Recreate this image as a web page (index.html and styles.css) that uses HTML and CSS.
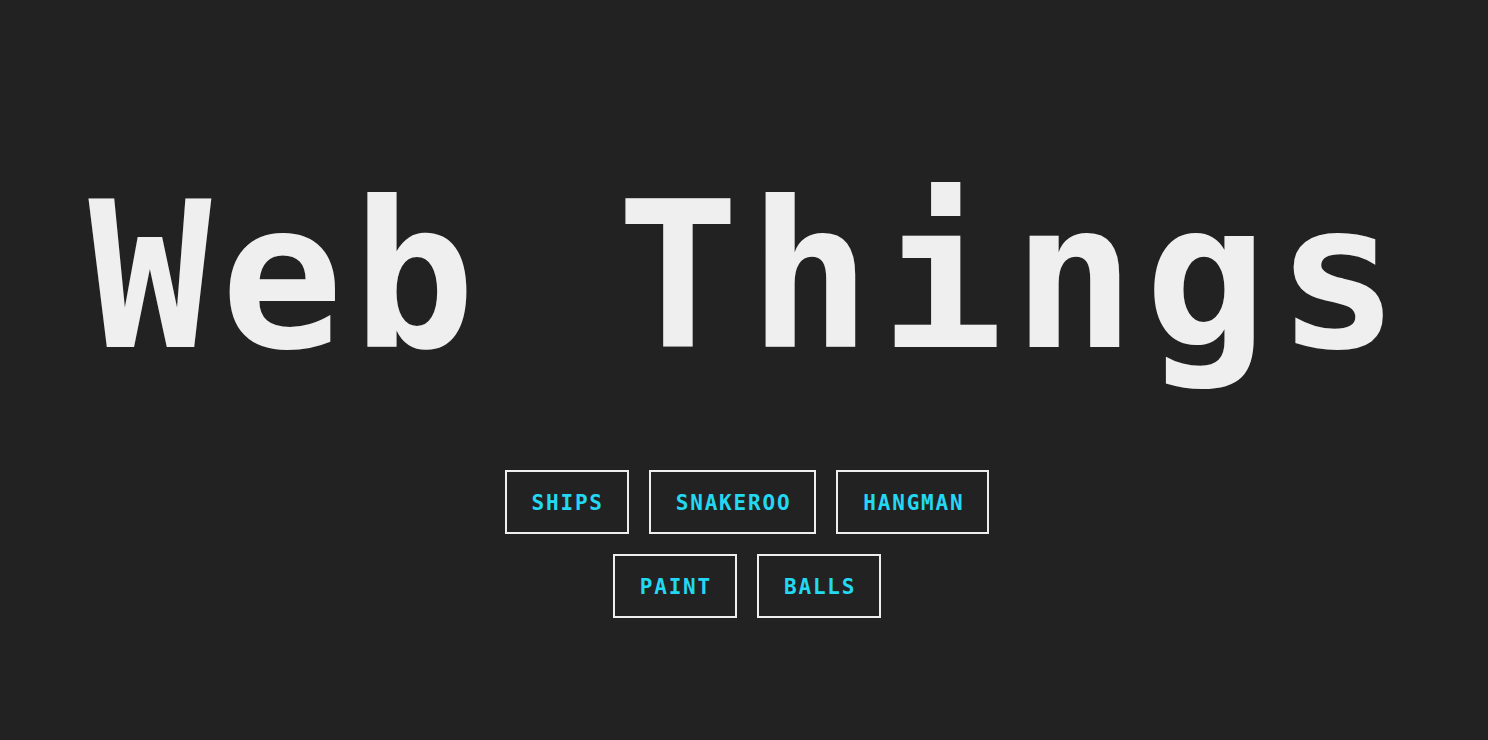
FILE: index.html
```html
<!DOCTYPE html>
<html lang="en">
<head>
    <meta charset="UTF-8">
    <meta name="viewport" content="width=device-width, initial-scale=1.0">
    <title>Web Things</title>
    <link rel="stylesheet" href="styles.css">
</head>
<body>
    <h1 class="title">Web Things</h1>

    <div class="nav-links">
        <a href="/ships">Ships</a>
        <a href="/snakeroo">Snakeroo</a>
        <a href="/hangman">Hangman</a>
        <a href="/paint">Paint</a>
        <a href="/balls">Balls</a>
    </div>
</body>
</html>
```

FILE: styles.css
```css
body {
    margin: 0;
    background-color: #222222;
    color: #eeeeee;
    font-family: "DejaVu Sans Mono", "Liberation Mono", monospace;
    display: flex;
    flex-direction: column;
    align-items: center;
}
.title {
    margin: 175px 0 0 0;
    font-size: 204px;
    line-height: 1;
    font-weight: bold;
    letter-spacing: 9.2px;
    padding-left: 9px;
    color: #efefef;
}
.nav-links {
    margin-top: 91px;
    max-width: 540px;
    padding-left: 6px;
    display: flex;
    flex-wrap: wrap;
    justify-content: center;
    gap: 20px;
}
.nav-links a {
    display: block;
    padding: 19px 23px 17px 25px;
    border: 2px solid #eeeeee;
    color: #22d8f2;
    font-size: 21px;
    line-height: 24px;
    font-weight: bold;
    letter-spacing: 1.8px;
    text-transform: uppercase;
    text-decoration: none;
}
.nav-links a:hover {
    background-color: #2c2c2c;
}
```
